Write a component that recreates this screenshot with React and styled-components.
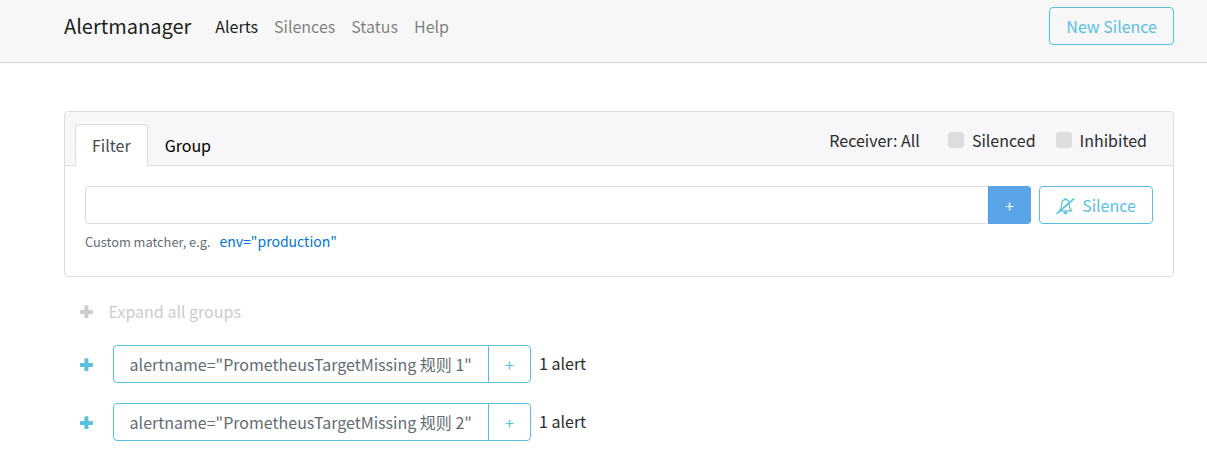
import React from 'react';
import styled, { createGlobalStyle, css } from 'styled-components';

const GlobalStyle = createGlobalStyle`
  *, *::before, *::after { box-sizing: border-box; }
  body {
    margin: 0;
    background: #fff;
    color: #292b2c;
    font: 16px/24px "Noto Sans CJK SC", "Noto Sans", sans-serif;
  }
  button, input { font: inherit; }
`;

const info = '#5bc0de';
const border = '#dcdddd';

const Header = styled.header`
  height: 63px;
  padding: 7px 33px 0 64px;
  display: flex;
  align-items: flex-start;
  background: #f7f7f7;
  border-bottom: 1px solid #d5d5d5;
`;

const Brand = styled.span`
  width: 151.3px;
  font-size: 20px;
  line-height: 38px;
  color: rgba(0, 0, 0, 0.9);
`;

const Nav = styled.nav`
  display: flex;
  gap: 16px;
  flex: 1;
  line-height: 38px;
`;

const NavLink = styled.a`
  color: ${({ $active }) => ($active ? 'rgba(0,0,0,.9)' : 'rgba(0,0,0,.5)')};
`;

const Button = styled.button`
  height: 38px;
  padding: 0 16px;
  display: flex;
  align-items: center;
  justify-content: center;
  background: transparent;
  color: ${({ $muted }) => ($muted ? '#636c72' : info)};
  border: 1px solid ${info};
  border-radius: 4px;
  white-space: nowrap;
`;

const Main = styled.main`
  padding: 48px 33px 0 64px;
`;

const Card = styled.section`
  height: 166px;
  border: 1px solid ${border};
  border-radius: 4px;
  overflow: hidden;
`;

const CardHeader = styled.div`
  height: 54px;
  padding: 0 26px 0 10px;
  display: flex;
  align-items: flex-end;
  background: #f7f7f9;
  box-shadow: inset 0 -1px ${border};
`;

const Tab = styled.div`
  height: 42px;
  padding: 8px 16px 0;
  border: 1px solid transparent;
  border-bottom: 0;
  border-radius: 4px 4px 0 0;
  color: #000;
  ${({ $active }) =>
    $active &&
    css`
      color: #464a4c;
      background: #fff;
      border-color: ${border};
    `}
`;

const Options = styled.div`
  margin-left: auto;
  height: 54px;
  padding-top: 16px;
  display: flex;
`;

const Option = styled.label`
  display: flex;
  margin-left: 28px;

  & + & {
    margin-left: 20px;
  }
`;

const Checkbox = styled.span`
  width: 16px;
  height: 16px;
  margin: 4px 8px 0 0;
  border-radius: 4px;
  background: #ddd;
`;

const CardBody = styled.div`
  padding: 20px;
`;

const FilterRow = styled.div`
  display: flex;
`;

const MatcherInput = styled.input`
  flex: 1;
  min-width: 0;
  height: 38px;
  border: 1px solid ${border};
  border-right: 0;
  border-radius: 4px 0 0 4px;
`;

const AddButton = styled(Button)`
  width: 43px;
  margin-right: 8px;
  padding: 0;
  color: #fff;
  background: #5aa5e7;
  border-color: #5aa5e7;
  border-left-color: #4799e2;
  border-radius: 0 4px 4px 0;
`;

const SilenceButton = styled(Button)`
  width: 114px;
  gap: 6px;
`;

const Hint = styled.div`
  margin-top: 5px;
  display: flex;
  align-items: baseline;
  gap: 9px;
  font-size: 12.8px;
  color: #636c72;
`;

const Example = styled.a`
  font-size: 14px;
  color: #0275d8;
`;

const ExpandAll = styled.div`
  height: 24px;
  margin: 22px 0 22px;
  padding-left: 15px;
  display: flex;
  align-items: center;
  gap: 14.6px;
  color: #ccc;
`;

const GroupRow = styled.div`
  height: 38px;
  margin-bottom: 20px;
  padding-left: 15px;
  display: flex;
  align-items: center;
  color: ${info};
`;

const LabelButton = styled(Button)`
  width: 376px;
  margin-left: 19px;
  padding: 0 0 0 15.6px;
  justify-content: flex-start;
  border-radius: 4px 0 0 4px;
`;

const LabelAdd = styled(Button)`
  width: 43px;
  margin-left: -1px;
  padding: 0;
  border-radius: 0 4px 4px 0;
`;

const Count = styled.span`
  margin: 0 0 2px 8px;
  color: #292b2c;
`;

const Icon = styled.svg`
  flex: none;
  fill: currentColor;
`;

const PlusIcon = () => (
  <Icon width="15" height="18" viewBox="0 0 15 18" aria-hidden="true">
    <path d="M6.200 3.300h2.400a.8.8 0 0 1 .8.8V8h3.700a.8.8 0 0 1 .8.8v2.400a.8.8 0 0 1-.8.8H9.400v3.200a.8.8 0 0 1-.8.800H6.200a.8.8 0 0 1-.8-.8V12H1.800a.8.8 0 0 1-.8-.8V8.800A.8.8 0 0 1 1.800 8h3.600V4.100a.8.8 0 0 1 .8-.8z" />
  </Icon>
);

const BellSlashIcon = () => (
  <Icon width="20" height="20" viewBox="0 0 20 20" aria-hidden="true">
    <g fill="none" stroke="currentColor" strokeWidth="1.2" strokeLinejoin="round">
      <path d="M3.200 15.900C5 14.400 5.700 12 5.700 9c0-2.700 1.400-4.400 3.700-4.400s3.800 1.700 3.800 4.400c0 3 .8 5.400 2.700 6.900z" />
      <path d="M.7 18.800 18.200 3.400" strokeWidth="1.700" />
    </g>
    <path d="M8.600 3.100h1.700v1.500H8.600zM7.200 16.800h4.500c-.1 1.600-1 2.400-2.200 2.400s-2.200-.8-2.300-2.400z" />
  </Icon>
);

const links = ['Alerts', 'Silences', 'Status', 'Help'];
const groups = [1, 2];

export default function App() {
  return (
    <>
      <GlobalStyle />
      <Header>
        <Brand>Alertmanager</Brand>
        <Nav>
          {links.map((l, i) => (
            <NavLink key={l} $active={i === 0}>{l}</NavLink>
          ))}
        </Nav>
        <Button>New Silence</Button>
      </Header>
      <Main>
        <Card>
          <CardHeader>
            <Tab $active>Filter</Tab>
            <Tab>Group</Tab>
            <Options>
              <span>Receiver: All</span>
              <Option><Checkbox />Silenced</Option>
              <Option><Checkbox />Inhibited</Option>
            </Options>
          </CardHeader>
          <CardBody>
            <FilterRow>
              <MatcherInput aria-label="Matcher" />
              <AddButton>+</AddButton>
              <SilenceButton><BellSlashIcon />Silence</SilenceButton>
            </FilterRow>
            <Hint>
              Custom matcher, e.g.
              <Example>env="production"</Example>
            </Hint>
          </CardBody>
        </Card>
        <ExpandAll><PlusIcon />Expand all groups</ExpandAll>
        {groups.map((n) => (
          <GroupRow key={n}>
            <PlusIcon />
            <LabelButton $muted>{`alertname="PrometheusTargetMissing 规则 ${n}"`}</LabelButton>
            <LabelAdd>+</LabelAdd>
            <Count>1 alert</Count>
          </GroupRow>
        ))}
      </Main>
    </>
  );
}
